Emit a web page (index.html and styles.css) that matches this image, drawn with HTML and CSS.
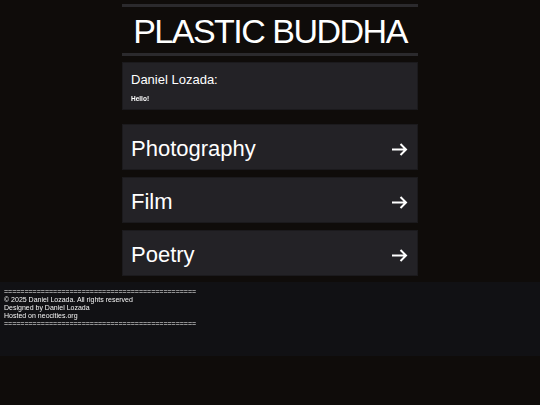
FILE: index.html
```html
<!DOCTYPE html>
<html lang="en">
<head>
<meta charset="utf-8">
<title>Plastic Buddha</title>
<link rel="stylesheet" href="styles.css">
</head>
<body>
<main class="wrap">
  <header class="masthead">
    <h1 class="title">PLASTIC BUDDHA</h1>
  </header>
  <section class="card intro">
    <h2 class="intro-name">Daniel Lozada:</h2>
    <p class="intro-text">Hello!</p>
  </section>
  <nav class="links">
    <a class="link card" href="#"><span>Photography</span><svg class="arrow" viewBox="0 0 17 13" width="17" height="13"><path d="M1 6.5H15M9.5 1L15 6.5L9.5 12" fill="none" stroke="#fff" stroke-width="2"/></svg></a>
    <a class="link card" href="#"><span>Film</span><svg class="arrow" viewBox="0 0 17 13" width="17" height="13"><path d="M1 6.5H15M9.5 1L15 6.5L9.5 12" fill="none" stroke="#fff" stroke-width="2"/></svg></a>
    <a class="link card" href="#"><span>Poetry</span><svg class="arrow" viewBox="0 0 17 13" width="17" height="13"><path d="M1 6.5H15M9.5 1L15 6.5L9.5 12" fill="none" stroke="#fff" stroke-width="2"/></svg></a>
  </nav>
</main>
<footer class="footer">
  <div>===============================================</div>
  <div>© 2025 Daniel Lozada. All rights reserved</div>
  <div>Designed by Daniel Lozada</div>
  <div>Hosted on neocities.org</div>
  <div>===============================================</div>
</footer>
</body>
</html>
```
FILE: styles.css
```css
html, body {
  margin: 0;
  padding: 0;
  background: #0f0c0a;
  color: #fff;
  font-family: "Liberation Sans", Arial, sans-serif;
}
.wrap {
  width: 296px;
  margin: 0 auto;
  padding-top: 4px;
}
.masthead {
  border-top: 3px solid #2b2a2d;
  border-bottom: 3px solid #2b2a2d;
  height: 46px;
  display: flex;
  align-items: center;
  justify-content: center;
}
.title {
  margin: 0;
  font-size: 34px;
  font-weight: normal;
  letter-spacing: -1.5px;
  line-height: 1;
  padding-top: 2px;
}
.card {
  background: #232226;
  border: 1px solid #1b1a1d;
  box-sizing: border-box;
}
.intro {
  margin-top: 6px;
  height: 48px;
  padding: 9px 8px 0;
}
.intro-name {
  margin: 0;
  font-size: 13px;
  font-weight: normal;
  line-height: 16px;
}
.intro-text {
  margin: 7px 0 0;
  font-size: 6.5px;
  font-weight: bold;
  line-height: 8px;
  will-change: transform;
}
.links {
  margin-top: 14px;
  display: flex;
  flex-direction: column;
  gap: 7px;
}
.link {
  height: 46px;
  display: flex;
  align-items: center;
  justify-content: space-between;
  padding: 0 9px 0 8px;
  color: #fff;
  text-decoration: none;
  font-size: 22px;
}
.link span {
  padding-top: 3px;
}
.arrow {
  display: block;
  margin-top: 4px;
}
.footer {
  margin-top: 6px;
  background: #111114;
  padding: 6px 4px 28px;
  font-size: 7px;
  line-height: 8px;
  color: #f4f4f4;
  will-change: transform;
}
```
